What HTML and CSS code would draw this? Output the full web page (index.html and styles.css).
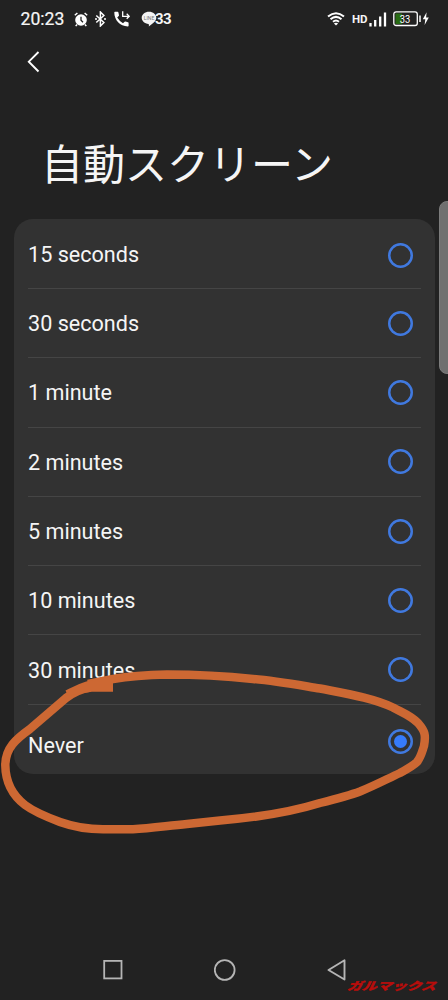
FILE: index.html
```html
<!DOCTYPE html>
<html lang="ja">
<head>
<meta charset="utf-8">
<title>自動スクリーン</title>
<link rel="stylesheet" href="styles.css">
</head>
<body>
<div class="screen">
  <header class="status">
    <span class="clock">20:23</span>
    <svg class="alarm" width="14" height="15" viewBox="0 0 14 15"><circle cx="7" cy="8" r="5.8" fill="#fff"/><path d="M.8 3.2 3.4 1M13.2 3.2 10.6 1M3 12.5l-1.3 1.6M11 12.5l1.3 1.6" stroke="#fff" stroke-width="1.5"/><path d="M7 4.8V8.3l2 2" fill="none" stroke="#222" stroke-width="1.3"/></svg>
    <svg class="bluetooth" width="11" height="16" viewBox="0 0 11 16"><path d="M1.300 4.500 8.900 11.500 5.400 15V1L8.900 4.500 1.300 11.500" fill="none" stroke="#fff" stroke-width="1.5"/><path d="M0 8h2M9 8h2" stroke="#fff" stroke-width="1.6"/></svg>
    <svg class="call" width="16" height="16" viewBox="0 0 16 16"><path d="M.3 1.5Q.3.8 1 .8H3.600Q4.300.8 4.400 1.500L5 4.200Q5 4.700 4.700 5L3.200 6.600Q5.500 10.400 9 12.200L10.600 10.700Q11 10.300 11.500 10.500L14 11.200Q14.600 11.400 14.600 12V14.700Q14.600 15.400 13.800 15.400C6 15.400.3 9 .3 1.500Z" fill="#fff"/><path d="M8.700.2V5.300H15M12.700 2.800 15.200 5.300 12.700 7.800" fill="none" stroke="#fff" stroke-width="1.300"/></svg>
    <span class="line"><svg width="16" height="16" viewBox="0 0 16 16"><path d="M8 .8c4 0 7.300 2.700 7.300 6 0 3.500-4.200 6.200-7.500 8.700.2-1 .3-1.700-.3-2.500C3.700 12.700.7 10 .7 6.800.7 3.500 4 .8 8 .8Z" fill="#f4f4f4"/><text x="8" y="8.700" text-anchor="middle" font-size="5" textLength="10.500" fill="#777">LINE</text></svg><b>33</b></span>
    <span class="spacer"></span>
    <svg class="wifi" width="18" height="14" viewBox="0 0 18 14"><g fill="none" stroke="#fff" stroke-width="2"><path d="M1 4.600Q9-2.200 17 4.600"/><path d="M3.500 7.200Q9 2.600 14.500 7.200"/><path d="M6 9.800Q9 7.200 12 9.800"/></g><path d="M9 13.500 6.900 11.400Q9 9.900 11.100 11.400Z" fill="#fff"/></svg>
    <span class="hd">HD</span>
    <svg class="signal" width="18" height="15" viewBox="0 0 18 15"><path d="M1.500 14.500V11M6.200 14.500V8M11.200 14.500V4.500M16 14.500V.5" stroke="#fff" stroke-width="2.300"/></svg>
    <svg class="battery" width="37" height="16" viewBox="0 0 37 16"><rect x=".8" y=".9" width="23.500" height="13.600" rx="2.300" fill="#222" stroke="#fff" stroke-width="1.300"/><path d="M2.500 2.500H9V13H2.500Z" fill="#286b12"/><text x="12.100" y="11.700" text-anchor="middle" font-size="10.500" textLength="10.500" lengthAdjust="spacingAndGlyphs" fill="#fff">33</text><path d="M27 4.500V11" stroke="#fff" stroke-width="1.500"/><path d="M33.600 1.300 29.800 8.300H32.300L31.600 14 35.800 6.400H33.100Z" fill="#fff"/></svg>
  </header>
  <nav class="back"><svg width="14" height="22" viewBox="0 0 14 22"><path d="M12.500 1 2.800 10.700 12.500 20.500" fill="none" stroke="#fff" stroke-width="1.900"/></svg></nav>
  <h1 class="title">自動スクリーン</h1>
  <main class="card">
    <div class="row first"><span class="label">15 seconds</span><i class="radio"></i></div>
    <div class="row"><span class="label">30 seconds</span><i class="radio"></i></div>
    <div class="row"><span class="label">1 minute</span><i class="radio"></i></div>
    <div class="row"><span class="label">2 minutes</span><i class="radio"></i></div>
    <div class="row"><span class="label">5 minutes</span><i class="radio"></i></div>
    <div class="row"><span class="label">10 minutes</span><i class="radio"></i></div>
    <div class="row"><span class="label">30 minutes</span><i class="radio"></i></div>
    <div class="row last"><span class="label">Never</span><i class="radio selected"></i></div>
  </main>
  <footer class="navbar">
    <svg width="22" height="22" viewBox="0 0 22 22"><rect x="2.200" y="1.900" width="17.300" height="17.500" fill="none" stroke="#b5b5b5" stroke-width="1.800"/></svg>
    <svg width="22" height="22" viewBox="0 0 22 22"><circle cx="10.700" cy="11" r="9.900" fill="none" stroke="#b5b5b5" stroke-width="1.800"/></svg>
    <svg width="22" height="22" viewBox="0 0 22 22"><path d="M18.500 1.300V20.500L2.500 11Z" fill="none" stroke="#b5b5b5" stroke-width="1.900" stroke-linejoin="round"/></svg>
  </footer>
  <div class="edge-handle"></div>
  <svg class="marker" width="448" height="200" viewBox="0 650 448 200"><path d="M90 687.500C80 689 74 692 66 698L30 729C16 739 5.500 748 5.300 765C5.500 782 12 795 25 805C33 811 44 816 60 822C74 827 86 829.300 103 829.300H133C150 828.500 166 826 187 824L220 820.500C262 817 291 812 320 803C336 799 348 796 360 791.500C376 785 387 779 400 773Q413 766 417 762C421 757 422 752 424 746C426 735 425 731 418 723C410 715 403 713 393 707.500C373 698 348 694 320 688.500C298 685 276 681 253 679C225 676 196 674.500 167 674.500C146 675 131 676 113 679L88 684" fill="none" stroke="#cd6833" stroke-width="8.500"/><path d="M65.500 690.500C75 686 82 682 93 680L113 676V691.700H92Q79 693 68 696Z" fill="#cd6833"/></svg>
  <div class="watermark">ガルマックス</div>
</div>
</body>
</html>
```
FILE: styles.css
```css
* { box-sizing: border-box; }
body { margin: 0; background: #222; color: #f5f5f5; font-family: Roboto, "Noto Sans CJK JP", sans-serif; }
svg { display: block; flex: none; }
.screen { position: relative; width: 448px; height: 1000px; overflow: hidden; display: flex; flex-direction: column; }
.status { display: flex; align-items: center; height: 38px; padding: 0 18px 0 20.500px; }
.clock { width: 44px; font-size: 17.6px; line-height: 36px; -webkit-text-stroke: .2px #f5f5f5; }
.alarm { margin-left: 9.500px; }
.bluetooth { margin-left: 7px; }
.call { margin-left: 8px; }
.line { display: flex; align-items: center; margin-left: 11px; }
.line b { font-size: 15px; line-height: 16px; font-weight: 700; letter-spacing: -.6px; margin-left: -2px; }
.spacer { flex: 1; }
.hd { font-size: 11.5px; font-weight: 700; margin-left: 7px; width: 16px; }
.signal { margin-left: 1px; }
.battery { margin-left: 6px; }
.back { height: 92px; padding: 13px 0 0 26px; }
.title { margin: 0; height: 89px; padding: 0 0 0 41px; font: 400 42px/64px "Noto Sans CJK JP", sans-serif; white-space: nowrap; }
.card { width: 421px; height: 554.500px; margin-left: 14px; padding: .7px 14px 0; border-radius: 19px; background: #323232; }
.row { display: flex; justify-content: space-between; align-items: center; height: 69.310px; padding-right: 8.500px; border-bottom: 1px solid #454545; }
.label { font-size: 21.600px; line-height: 30px; padding-top: 2px; }
.radio { width: 25px; height: 25px; box-shadow: inset 0 0 0 2.500px #4079df; border-radius: 50%; }
.first .radio { margin-top: 4px; }
.last { border: 0; }
.last .label { margin-top: 11px; }
.last .radio { margin-top: 4px; }
.selected { display: grid; place-items: center; }
.selected::after { content: ""; width: 13px; height: 13px; border-radius: 50%; background: #367bfb; }
.navbar { display: flex; justify-content: space-between; margin-top: auto; padding: 0 100px 19px 102px; }
.edge-handle { position: absolute; left: 439px; top: 201px; width: 18px; height: 173px; border-radius: 8px; background: #707070; border: 1px solid #7c7c7c; }
.marker { position: absolute; left: 0; top: 650px; }
.watermark { position: absolute; left: 349px; top: 977px; font: 900 14px/16px "Noto Sans CJK JP", sans-serif; color: #b80d0b; -webkit-text-stroke: .5px #b80d0b; white-space: nowrap; transform-origin: left center; transform: scale(1.06, .78) skewX(-20deg); }
```
